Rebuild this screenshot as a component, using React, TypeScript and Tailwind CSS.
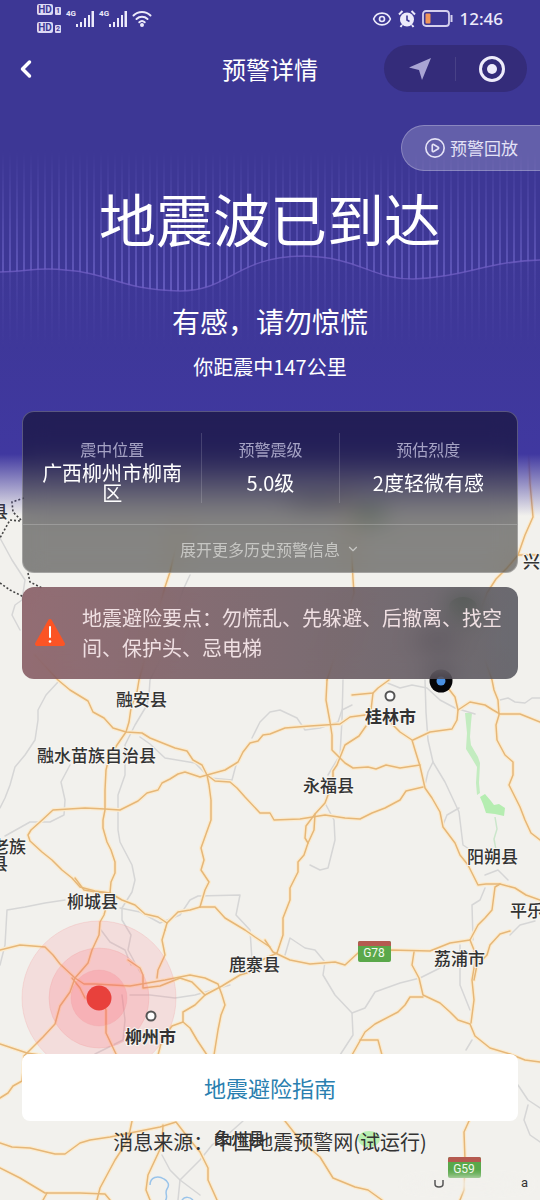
import { ChevronLeft, ChevronDown, CirclePlay, Eye } from "lucide-react";

const roads = [
  "528,440 530,483 533,517 525,535 518,555 540,555",
  "518,555 507,568 496,579 487,593 470,640 466,660",
  "345,470 350,520 353,579 354,593 340,640 327,680",
  "182,520 170,572 165,587 150,640 139,680 137,692 131,708 129,722 126,732 117,745 109,758 106,770 105,790 105,810 103,820 103,828 107,842 111,850 115,862 115,873 111,882 110,893 104,915 100,922 99,935 92,950 88,963 82,970 75,978 70,992 60,1006 55,1024 43,1037 30,1050 24,1056 23,1070 22,1081 13,1086 8,1093 0,1098",
  "35,655 58,680 70,690 88,701 93,712 104,718 113,728 126,732 142,733 150,738 165,744 175,748 187,751 193,760 202,765 207,775",
  "207,775 200,777 185,772 178,774 170,779 162,783 158,790 147,793 138,801 120,810 105,809 85,808 53,810 40,822 31,830 28,835 30,841 42,852 52,860 62,870 72,878 80,887 95,891 110,893",
  "75,878 84,890 96,892 110,893 122,900 135,905 145,914 158,917 167,923 178,912 190,910 200,907",
  "200,907 205,890 209,882 201,870 204,860 201,848 206,834 211,820 211,800 209,785 207,775",
  "207,775 225,770 238,762 243,752 250,743 258,741 263,735 270,734 285,728 310,726 340,724 350,717 365,715",
  "207,775 215,781 230,782 237,788 245,797 260,813 270,813 274,820 300,819 325,815 345,818 360,819 372,813 385,808 400,800 406,791 423,787",
  "327,680 326,700 330,722 332,735 332,750 345,763 353,768 368,767 376,769 386,765 400,768 420,765",
  "366,726 359,736 345,745 341,755 337,765 333,771 333,785 328,795 325,803 315,814 314,830 308,843 304,855 298,862 298,872 290,888 290,900 283,918 283,935 277,953",
  "315,814 306,826 305,838 308,843",
  "389,680 378,688 373,693 352,695",
  "373,693 371,710",
  "390,722 400,732 412,740 415,750 420,766 425,788 432,798 440,812 443,827 455,843 460,855 468,865 478,885 486,884 500,884 515,888 526,895 540,900",
  "413,740 430,732 452,729 457,720 458,710 470,702 485,705 493,710 500,714 520,714 530,718 540,722",
  "448,688 455,697 458,710",
  "485,660 492,680 494,690 498,700 499,715 496,725 497,740 505,755 513,762 513,775 509,785 515,797 520,807 525,820 531,833 540,840",
  "0,950 20,945 45,947 53,955 60,964 75,978 84,984 95,984 130,986 165,980 190,975 205,978 218,984 222,995 225,1005 221,1015 218,1030 214,1055",
  "165,930 162,940 165,955 158,970 157,978",
  "167,923 165,930",
  "200,907 215,907 225,918 245,930 255,937 270,947",
  "277,953 262,960 250,972 240,975 222,986 205,995 195,1005 183,1012 183,1022 172,1026 162,1040 158,1055",
  "183,1022 190,1028 197,1040 207,1055",
  "0,1044 12,1048 27,1053 40,1055",
  "99,990 106,1010 106,1033 116,1054",
  "72,978 80,988 85,998",
  "128,960 140,968 143,975 143,988 160,986 180,978 192,982 205,995",
  "265,940 273,952 290,960 310,964 335,962 345,965 358,953 390,950 430,951 450,943 470,940 478,925 485,918 492,910 495,887 500,884",
  "414,952 412,965 419,978 423,995 440,1003 450,1012 458,1020 470,1024 475,1036 490,1048 510,1054 525,1060 540,1062",
  "423,997 410,997 405,1005 398,1012 375,1024 365,1032 352,1055",
  "360,1040 378,1040 382,1055",
  "470,940 474,950 475,962 472,980 474,1000 471,1023",
  "510,931 500,934 490,945 487,955 477,965 474,980",
  "0,1143 12,1147 30,1148 55,1154 65,1154 80,1143 90,1140 110,1137 130,1133 160,1127 176,1122 190,1140 200,1152 208,1168 208,1180 217,1200",
  "132,1121 128,1140 115,1160 100,1188 97,1200",
  "163,1125 162,1145 148,1175 146,1190 150,1200",
  "0,1168 20,1178 45,1193 80,1193 105,1194 110,1200",
  "47,1193 43,1200",
  "285,1121 300,1140 320,1157 333,1178 355,1187 368,1190 382,1200",
  "469,1121 464,1132 465,1160 464,1190 460,1200",
];

const paths = [
  "58,682 46,695 38,710 38,720 35,740 25,755 15,767 10,785 5,798 0,808",
  "0,538 12,560 25,580 22,600 15,605 12,615 20,630",
  "190,575 183,590 160,660 150,680 149,695 147,705 135,725 125,745 125,775 118,795 118,830 120,842 132,865 135,880 132,892 122,908 122,920 131,935 128,950 140,972",
  "70,765 61,782 65,800 64,815 50,822 30,822 5,836",
  "140,737 150,744 165,758 195,763 210,778 232,780 236,765",
  "252,738 260,722 270,712 280,710 297,718 305,730 320,728 338,722 342,710 352,705",
  "343,680 342,720 340,755 328,775",
  "425,680 426,712 428,740 433,762 445,782 452,797 459,812 463,845 475,853 485,860",
  "433,762 428,772 425,785",
  "459,808 447,815 443,825",
  "385,682 400,688 412,685 427,688 440,700 455,708 475,714",
  "500,700 508,698 515,702 525,703 532,698 540,698",
  "0,965 5,945 7,910 25,907 45,903 65,900",
  "120,908 140,912 160,923 180,915 190,900 198,896 240,895 236,915 250,930 252,960",
  "101,930 110,942 125,950 131,965",
  "122,995 125,1020 123,1040 95,1054",
  "130,995 150,995 175,998 195,995 230,985",
  "285,955 290,938 305,948 315,950 325,962 323,975 335,995 352,1013 353,1035 340,1055",
  "352,1013 365,1008 375,992 400,983 420,978 440,968",
  "485,888 480,900 472,905 473,940",
  "460,945 460,985 470,1010",
  "325,803 334,820 335,840 328,868 320,870 310,865",
  "485,875 498,870 508,880",
  "510,935 520,925 535,921",
  "162,1155 170,1170 180,1180 178,1200",
  "180,1180 200,1160 212,1145 225,1137 243,1121",
  "180,1180 200,1195",
  "472,1040 466,1050",
  "518,1085 528,1100 540,1108",
  "528,1105 524,1120 530,1135 540,1142",
];

const borders = [
  "24,498 12,502 13,512 22,521",
  "20,521 10,520 0,538",
  "28,573 30,582 42,588",
  "0,583 10,590 24,597",
];

const places = [
  { name: "县", x: -9, y: 518 },
  { name: "兴", x: 523, y: 568 },
  { name: "融安县", x: 116, y: 706 },
  { name: "融水苗族自治县", x: 37, y: 762 },
  { name: "永福县", x: 303, y: 792 },
  { name: "老族", x: -8, y: 853 },
  { name: "县", x: -9, y: 870 },
  { name: "阳朔县", x: 467, y: 863 },
  { name: "柳城县", x: 67, y: 908 },
  { name: "平乐", x: 510, y: 917 },
  { name: "鹿寨县", x: 229, y: 971 },
  { name: "荔浦市", x: 434, y: 965 },
  { name: "象州县", x: 214, y: 1145 },
];

function Lines({ data, color, width }: { data: string[]; color: string; width: number }) {
  return (
    <g fill="none" stroke={color} strokeWidth={width} strokeLinejoin="round" strokeLinecap="round">
      {data.map((points) => (
        <polyline key={points} points={points} />
      ))}
    </g>
  );
}

function Shield({ x, y, name }: { x: number; y: number; name: string }) {
  return (
    <g>
      <rect x={x} y={y} width="33" height="21" rx="2" fill="#5aa84a" />
      <path d={`M${x} ${y + 5}v-3a2 2 0 0 1 2-2h29a2 2 0 0 1 2 2v3z`} fill="#b55a50" />
      <text x={x + 16} y={y + 16} textAnchor="middle" fontSize="12" fill="#f2faee" className="font-['Roboto',sans-serif]">
        {name}
      </text>
    </g>
  );
}

function QuakeMap() {
  return (
    <svg className="absolute inset-0 size-full" viewBox="0 0 540 1200" preserveAspectRatio="xMidYMin slice">
      <defs>
        <filter id="soft" x="-50%" y="-50%" width="200%" height="200%">
          <feGaussianBlur stdDeviation="4" />
        </filter>
      </defs>
      <rect width="540" height="1200" fill="#f2f1ed" />
      <path d="M465 713h7l-1 10-1 14 1 8 7 12 2 6-1 20 1 10-3 2-1-12 1-16-6-10-5-8 1-16z" fill="#c3ecc0" />
      <path d="M480 797l5-3 6 7 3 4 5-1 6 4-1 8-9-2-9-1-3-9z" fill="#b5edb1" />
      <path d="M495 817l2 12-3 10 3 16-8 8" fill="none" stroke="#cbe6cb" strokeWidth="1.5" />
      <ellipse cx="463" cy="607" rx="14" ry="10" fill="#4f8a4a" />
      <ellipse cx="370" cy="514" rx="16" ry="6" fill="#8aad86" />
      <ellipse cx="320" cy="502" rx="36" ry="4" fill="#888" />
      <ellipse cx="437" cy="640" rx="22" ry="6" fill="#777" />
      <ellipse cx="369" cy="1139" rx="11" ry="8" fill="#b8efb0" />
      <path d="M150 1185c0-8 8-10 14-6 4 2 6 6 3 10s2 8-2 12M182 1200c3-4 8-3 11 0" fill="none" stroke="#9ac4ea" strokeWidth="1.5" />
      <Lines data={paths} color="#d6d6d6" width={1.5} />
      <Lines data={roads} color="#fbebcf" width={4} />
      <Lines data={roads} color="#e6b778" width={1.5} />
      <g fill="none" stroke="#444" strokeWidth="1.6" strokeDasharray="2 2">
        {borders.map((points) => (
          <polyline key={points} points={points} />
        ))}
      </g>

      <g fill="#ff5c6c" stroke="#ef9a9a" strokeOpacity=".25">
        <circle cx="99" cy="998" r="77" fillOpacity=".13" />
        <circle cx="99" cy="998" r="50" fillOpacity=".17" />
        <circle cx="99" cy="998" r="28" fillOpacity=".2" />
      </g>
      <circle cx="99" cy="998" r="12.5" fill="#e8413c" />

      <g fontSize="17" fill="#333" stroke="#f7f6f2" strokeWidth="2" paintOrder="stroke">
        {places.map((p) => (
          <text key={p.name + p.y} x={p.x} y={p.y} fontWeight="500">
            {p.name}
          </text>
        ))}
        <text x="365" y="723" fontWeight="700">桂林市</text>
        <text x="125" y="1043" fontWeight="700">柳州市</text>
      </g>
      <g fill="#fff" stroke="#555" strokeWidth="2">
        <circle cx="390" cy="696" r="4.500" />
        <circle cx="151" cy="1016" r="4.500" />
      </g>
      <Shield x={358} y={941} name="G78" />
      <Shield x={448} y={1157} name="G59" />
      <ellipse cx="468" cy="1184" rx="62" ry="7" fill="#f2f1ed" opacity=".85" filter="url(#soft)" />
      <path d="M435 1180v4q0 3 4 3t4-3v-4" fill="none" stroke="#555" strokeWidth="1.5" />
      <text x="521" y="1187" fontSize="13" fill="#333" className="font-['Roboto',sans-serif]">a</text>

      <circle cx="441" cy="681" r="11.5" fill="#050508" />
      <circle cx="441" cy="681" r="4.500" fill="#4a90e2" />
    </svg>
  );
}

const wave = "M0 272C30 271 40 267 65 270C110 273 120 290 180 291C230 291 235 257 303 256C360 257 370 279 413 279C460 278 490 261 540 260";

function Waves() {
  return (
    <svg className="absolute inset-x-0 top-0 h-[512px] w-full" viewBox="0 0 540 512" preserveAspectRatio="none">
      <defs>
        <pattern id="bars" width="7" height="10" patternUnits="userSpaceOnUse">
          <rect x="2" width="2" height="10" fill="#7a70d4" />
        </pattern>
        <linearGradient id="up" gradientUnits="userSpaceOnUse" x1="0" y1="150" x2="0" y2="285">
          <stop offset="0" stopColor="#fff" stopOpacity="0" />
          <stop offset="1" stopColor="#fff" stopOpacity=".6" />
        </linearGradient>
        <linearGradient id="down" gradientUnits="userSpaceOnUse" x1="0" y1="260" x2="0" y2="350">
          <stop offset="0" stopColor="#fff" stopOpacity=".2" />
          <stop offset="1" stopColor="#fff" stopOpacity="0" />
        </linearGradient>
        <mask id="above">
          <path d={wave + "V140H0Z"} fill="url(#up)" />
        </mask>
        <mask id="below">
          <path d={wave + "V360H0Z"} fill="url(#down)" />
        </mask>
      </defs>
      <rect y="140" width="540" height="160" fill="url(#bars)" mask="url(#above)" />
      <rect y="240" width="540" height="120" fill="url(#bars)" mask="url(#below)" />
      <path d={wave} fill="none" stroke="#7563c8" strokeOpacity=".7" strokeWidth="1.5" />
    </svg>
  );
}

function HdBadge({ n }: { n: number }) {
  return (
    <div className="flex items-end gap-0.5">
      <span className="flex h-[11px] w-4 items-center justify-center rounded-xs bg-[#dcd9f4] font-['Roboto',sans-serif] text-[10px] font-bold leading-none text-[#3d3795]">
        HD
      </span>
      <span className="flex h-2 w-[6px] items-center justify-center rounded-[1px] bg-[#dcd9f4] font-['Roboto',sans-serif] text-[7px] font-bold leading-none text-[#3d3795]">
        {n}
      </span>
    </div>
  );
}

function Signal() {
  return (
    <div className="flex">
      <span className="font-['Roboto',sans-serif] text-[8px] font-bold leading-none">4G</span>
      <svg className="h-[18px] w-[18px]" viewBox="0 0 18 18" fill="currentColor">
        <path d="M0 14h2v3H0zM4 12h2v5H4zM8 8h2v9H8zM12 5h2v12h-2zM15.500 1h2.500v16h-2.500z" />
      </svg>
    </div>
  );
}

function StatusBar() {
  return (
    <div className="flex h-[37px] items-center justify-between px-[37px] text-[#eceafa]">
      <div className="flex items-center gap-[5px]">
        <div className="flex flex-col gap-[7px]">
          <HdBadge n={1} />
          <HdBadge n={2} />
        </div>
        <Signal />
        <Signal />
        <svg className="h-[17px] w-5" viewBox="0 0 20 17" fill="none" stroke="currentColor" strokeWidth="2" strokeLinecap="round">
          <path d="M1.500 5.500a12 12 0 0 1 17 0M4.500 9a8 8 0 0 1 11 0M7.300 12.200a4 4 0 0 1 5.400 0" />
          <circle cx="10" cy="15" r="1" fill="currentColor" />
        </svg>
      </div>
      <div className="flex items-center gap-[6px]">
        <Eye className="size-5" />
        <svg className="size-[18px]" viewBox="0 0 18 18">
          <circle cx="9" cy="9.500" r="7" fill="currentColor" />
          <path d="M1 4.500 4.500 1M17 4.500 13.500 1M4 15l-1.500 2M14 15l1.500 2" stroke="currentColor" strokeWidth="2" />
          <path d="M9 5.500V10l2.500 1.500" fill="none" stroke="#3d3795" strokeWidth="1.6" />
        </svg>
        <svg className="h-[17px] w-[31px]" viewBox="0 0 31 17">
          <rect x="1" y="1" width="26" height="15" rx="3" fill="none" stroke="#d5d0ee" strokeWidth="1.8" />
          <rect x="3.500" y="3.500" width="5" height="10" rx="1" fill="#f0955a" />
          <path d="M29.500 5v7" stroke="#d5d0ee" strokeWidth="2" />
        </svg>
        <span className="font-['Noto_Sans',sans-serif] text-[17px] font-medium leading-5">12:46</span>
      </div>
    </div>
  );
}

function Stat({ label, value }: { label: string; value: string }) {
  return (
    <div className="border-r border-white/15 px-4 pt-1 text-center last:border-r-0">
      <dt className="text-base leading-6 text-[#a5a2c4]">{label}</dt>
      <dd className="mt-0.5 flex min-h-10 items-center justify-center text-[20px] leading-5 text-white">{value}</dd>
    </div>
  );
}

export default function App() {
  return (
    <div className="relative flex min-h-screen flex-col overflow-hidden bg-[#f2f1ed] font-['Noto_Sans_CJK_SC',sans-serif]">
      <QuakeMap />
      <div className="absolute inset-x-0 top-0 h-[516px] bg-linear-to-b from-[#3d3795] from-50% via-[#4038a0] via-88% to-[#4038a0]/0"></div>
      <Waves />

      <header className="relative text-white">
        <StatusBar />
        <nav className="mt-2 grid h-[46px] grid-cols-[1fr_auto_1fr] items-center">
          <button aria-label="返回" className="ml-3 w-7">
            <ChevronLeft className="size-7" strokeWidth={3} />
          </button>
          <h2 className="text-2xl leading-8">预警详情</h2>
          <div className="mr-[13px] flex h-[47px] w-[143px] items-center justify-self-end rounded-full bg-[#342c7a]">
            <button aria-label="定位" className="flex flex-1 justify-center">
              <svg className="size-6" viewBox="0 0 24 24" fill="#a9a4d4">
                <path d="M23 1 1 10.500l10 2.500 3 10z" />
              </svg>
            </button>
            <span className="h-6 w-px bg-white/10"></span>
            <button aria-label="关闭" className="flex flex-1 justify-center">
              <svg className="size-7" viewBox="0 0 28 28">
                <circle cx="14" cy="14" r="11.5" fill="none" stroke="#eeecfb" strokeWidth="3" />
                <circle cx="14" cy="14" r="5" fill="#eeecfb" />
              </svg>
            </button>
          </div>
        </nav>
        <button className="ml-auto mt-[34px] flex h-[46px] items-center gap-1 rounded-l-full border border-r-0 border-white/25 bg-white/20 px-[22px] text-[17px] leading-6 text-[#e4e2f6]">
          <CirclePlay className="size-[22px]" strokeWidth={1.8} />
          预警回放
        </button>
      </header>

      <main className="relative flex flex-1 flex-col px-[22px]">
        <h1 className="mt-4 text-center text-[57px] leading-[60px] text-white">地震波已到达</h1>
        <p className="mt-[54px] text-center text-[28px] leading-10 text-white">有感，请勿惊慌</p>
        <p className="mt-[14px] text-center text-[20px] leading-6 text-white">你距震中147公里</p>

        <section className="mt-8 rounded-xl border border-white/25 bg-black/45 backdrop-blur-md">
          <dl className="my-[21px] grid grid-cols-[180fr_138fr_178fr]">
            <Stat label="震中位置" value="广西柳州市柳南区" />
            <Stat label="预警震级" value="5.0级" />
            <Stat label="预估烈度" value="2度轻微有感" />
          </dl>
          <button className="flex h-12 w-full items-center justify-center gap-1.5 border-t border-white/20 text-base text-[#c6c6c3]">
            展开更多历史预警信息
            <ChevronDown className="size-3.5" />
          </button>
        </section>

        <section className="mt-[14px] flex items-center rounded-xl bg-linear-to-r from-[#72404a]/75 to-[#3c3c46]/75 py-4 pl-3 pr-2 backdrop-blur-md">
          <svg className="h-[30px] w-8 shrink-0" viewBox="0 0 32 30">
            <path d="M16 3 3 26h26z" fill="#fb5425" stroke="#fb5425" strokeWidth="4" strokeLinejoin="round" />
            <path d="M16 9v10" stroke="#fff" strokeWidth="2" strokeLinecap="round" />
            <circle cx="16" cy="23.500" r="1.3" fill="#fff" />
          </svg>
          <p className="ml-4 text-[20px] leading-[30px] text-[#efdfe2]">
            地震避险要点：勿慌乱、先躲避、后撤离、找空间、保护头、忌电梯
          </p>
        </section>

        <button className="mt-auto h-[67px] rounded-lg bg-white text-[22px] text-[#2a7fb0]">地震避险指南</button>
        <p className="mb-[46px] mt-[9px] text-center text-[20px] leading-6 text-[#333]">消息来源：中国地震预警网(试运行)</p>
      </main>
    </div>
  );
}
